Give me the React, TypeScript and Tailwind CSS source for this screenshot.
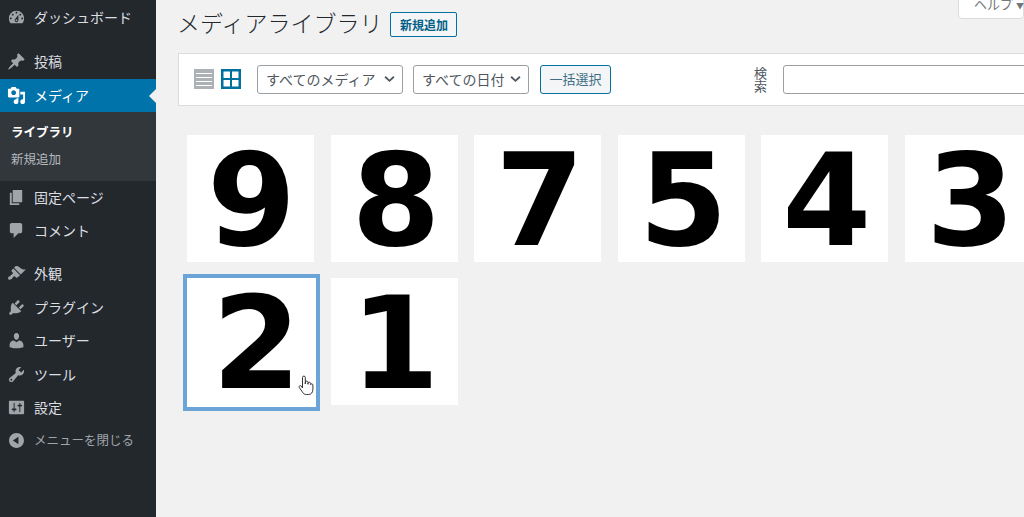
import React from "react";

const P: Record<string, string> = {
  dashboard:
    "M3.76 16h12.48c1.1-1.37 1.76-3.11 1.76-5 0-4.42-3.58-8-8-8s-8 3.58-8 8c0 1.89.66 3.63 1.76 5zM10 4c.55 0 1 .45 1 1s-.45 1-1 1-1-.45-1-1 .45-1 1-1zM6 6c.55 0 1 .45 1 1s-.45 1-1 1-1-.45-1-1 .45-1 1-1zm8 0c.55 0 1 .45 1 1s-.45 1-1 1-1-.45-1-1 .45-1 1-1zm-5.37 5.55L12 7v6c0 1.1-.9 2-2 2s-2-.9-2-2c0-.57.24-1.08.63-1.45zM4 10c.55 0 1 .45 1 1s-.45 1-1 1-1-.45-1-1 .45-1 1-1zm12 0c.55 0 1 .45 1 1s-.45 1-1 1-1-.45-1-1 .45-1 1-1zm-5 3c0-.55-.45-1-1-1s-1 .45-1 1 .45 1 1 1 1-.45 1-1z",
  post:
    "M10.44 3.02l1.82-1.82 6.36 6.35-1.83 1.82c-1.05-.68-2.48-.57-3.41.36l-.75.75c-.92.93-1.04 2.35-.35 3.41l-1.83 1.82-2.41-2.41-2.8 2.79c-.42.42-3.38 2.71-3.8 2.29s1.86-3.39 2.28-3.81l2.79-2.79L4.1 9.36l1.83-1.82c1.05.69 2.48.57 3.4-.36l.75-.75c.93-.92 1.05-2.35.36-3.41z",
  media:
    "M13 11V4c0-.55-.45-1-1-1h-1.67L9 1H5L3.67 3H2c-.55 0-1 .45-1 1v7c0 .55.45 1 1 1h10c.55 0 1-.45 1-1zM7 4.5c1.38 0 2.5 1.12 2.5 2.5S8.38 9.5 7 9.5 4.5 8.38 4.5 7 5.62 4.5 7 4.5zM14 6h5v10.5c0 1.38-1.12 2.5-2.5 2.5S14 17.88 14 16.5s1.12-2.5 2.5-2.5c.17 0 .34.02.5.05V9h-3V6zm-4 8.05V13h2v3.5c0 1.38-1.12 2.5-2.5 2.5S7 17.88 7 16.5 8.12 14 9.5 14c.17 0 .34.02.5.05z",
  page: "M6 15V2h10v13H6zm-1 1h8v2H3V5h2v11z",
  comment: "M5 2h9c1.1 0 2 .9 2 2v7c0 1.1-.9 2-2 2h-2l-5 5v-5H5c-1.1 0-2-.9-2-2V4c0-1.1.9-2 2-2z",
  appearance:
    "M14.48 11.06L7.41 3.99l1.5-1.5c.5-.56 2.3-.47 3.51.32 1.21.8 1.43 1.28 2.91 2.1 1.18.64 2.45 1.26 4.45.85zm-.71.71L6.7 4.7 4.93 6.47c-.39.39-.39 1.02 0 1.41l1.06 1.06c.39.39.39 1.03 0 1.42-.6.6-1.43 1.11-2.21 1.69-.35.26-.7.53-1.01.84C1.43 13.23.4 14.84 1.5 15.94c.52.53 1.32.67 2.05.48.76-.19 1.4-.75 1.83-1.2.5-.51 1-1.54 1.59-2.13.39-.39 1.03-.39 1.42 0l1.06 1.06c.39.39 1.02.39 1.41 0z",
  plugin:
    "M13.11 4.36L9.87 7.6 8 5.73l3.24-3.24c.35-.34 1.05-.2 1.56.32.52.51.66 1.21.31 1.55zm-8 1.77l.91-1.12 9.01 9.01-1.19.84c-.71.71-2.63 1.16-3.82 1.16H6.14L4.9 17.26c-.59.59-1.54.59-2.12 0-.59-.58-.59-1.53 0-2.12l1.24-1.24v-3.88c0-1.13.4-3.19 1.09-3.89zm7.26 3.97l3.24-3.24c.34-.35 1.04-.21 1.55.31.52.51.66 1.21.31 1.55l-3.24 3.25z",
  user:
    "M10 9.25c-2.27 0-2.73-3.44-2.73-3.44C7 4.02 7.82 2 9.97 2c2.16 0 2.98 2.02 2.71 3.81 0 0-.41 3.44-2.68 3.44zm0 2.57L12.72 10c2.39 0 4.52 2.33 4.52 4.53v2.49s-3.65 1.13-7.24 1.13c-3.65 0-7.24-1.13-7.24-1.13v-2.49c0-2.25 1.94-4.48 4.47-4.48z",
  tools:
    "M16.68 9.77c-1.34 1.34-3.3 1.67-4.95.99l-5.41 6.52c-.99.99-2.59.99-3.58 0s-.99-2.59 0-3.57l6.52-5.42c-.68-1.65-.35-3.61.99-4.95 1.28-1.28 3.12-1.62 4.72-1.06l-2.89 2.89 2.82 2.82 2.86-2.87c.53 1.58.18 3.39-1.08 4.65zM3.81 16.21c.4.39 1.04.39 1.43 0 .4-.4.4-1.04 0-1.43-.39-.4-1.03-.4-1.43 0-.39.39-.39 1.03 0 1.43z",
  settings:
    "M18 16V4c0-.55-.45-1-1-1H3c-.55 0-1 .45-1 1v12c0 .55.45 1 1 1h14c.55 0 1-.45 1-1zM8 11h1c.55 0 1 .45 1 1s-.45 1-1 1H8v1.5c0 .28-.22.5-.5.5s-.5-.22-.5-.5V13H6c-.55 0-1-.45-1-1s.45-1 1-1h1V5.5c0-.28.22-.5.5-.5s.5.22.5.5V11zm5-2h-1c-.55 0-1-.45-1-1s.45-1 1-1h1V5.5c0-.28.22-.5.5-.5s.5.22.5.5V7h1c.55 0 1 .45 1 1s-.45 1-1 1h-1v5.5c0 .28-.22.5-.5.5s-.5-.22-.5-.5V9z",
  collapse: "M10 2.16c4.33 0 7.84 3.51 7.84 7.84s-3.51 7.84-7.84 7.84S2.16 14.33 2.16 10 5.71 2.16 10 2.16zm2 11.72V6.12L6.18 9.97z",
};

function Icon({ name, className }: { name: string; className: string }) {
  return (
    <svg viewBox="0 0 20 20" className={className} fill="currentColor" aria-hidden="true">
      <path d={P[name]} />
    </svg>
  );
}

function Row({ icon, label, className = "h-[33.5px]" }: { icon: string; label: string; className?: string }) {
  return (
    <div className={`flex items-center pl-[7px] text-[14px] text-[#dcdee0] ${className}`}>
      <Icon name={icon} className="h-[19px] w-[19px] text-[#a0a5aa]" />
      <span className="ml-[8px] whitespace-nowrap">{label}</span>
    </div>
  );
}

function Chevron() {
  return (
    <svg viewBox="0 0 12 8" className="h-[8px] w-[11px]" fill="none" stroke="#50575e" strokeWidth="2" aria-hidden="true">
      <path d="M1.2 1.5 6 6l4.8-4.5" />
    </svg>
  );
}

function Select({ label, className }: { label: string; className: string }) {
  return (
    <div className={`flex h-[29px] items-center justify-between rounded-[3px] border border-[#9a9fa4] bg-white pl-[8px] pr-[7px] text-[14px] text-[#50575e] ${className}`}>
      <span className="whitespace-nowrap">{label}</span>
      <Chevron />
    </div>
  );
}

function Tile({ n, nudge, selected }: { n: string; nudge: string; selected?: boolean }) {
  return (
    <div
      className={`relative flex items-center justify-center bg-white text-[128px] font-bold leading-[127px] text-black ${
        selected
          ? "-mb-[2px] -mr-[2px] h-[129px] w-[129px] outline-[4px] outline-[#6ba5d8]"
          : "h-[127px] w-[127px]"
      }`}
      style={{ fontFamily: '"DejaVu Sans", sans-serif' }}
    >
      <span className={nudge}>{n}</span>
      {selected && (
        <svg viewBox="0 0 16 22" className="absolute bottom-[10px] right-[2px] h-[22px] w-[16px]" fill="#fff" stroke="#333" strokeWidth="1" aria-hidden="true">
          <path d="M4.5 13V2.5a1.4 1.4 0 0 1 2.8 0V9l.1-1.6a1.3 1.3 0 0 1 2.6 0V9.3l.1-1.2a1.3 1.3 0 0 1 2.5.2v1.3a1.2 1.2 0 0 1 2.3.3v4.3c0 3-1.4 5.3-4.6 5.3H8.5c-2 0-3-.8-4-2.3L1.3 12.5c-.9-1.4.9-2.6 2-1.4z" />
        </svg>
      )}
    </div>
  );
}

export default function App() {
  const tiles = [
    { n: "9", nudge: "translate-x-[1px] translate-y-[2px]" },
    { n: "8", nudge: "translate-x-[2px] translate-y-[2px]" },
    { n: "7", nudge: "translate-x-[2px] translate-y-[2px]" },
    { n: "5", nudge: "translate-x-[2px] translate-y-[2px]" },
    { n: "4", nudge: "translate-x-[2px] translate-y-[2px]" },
    { n: "3", nudge: "translate-x-[2px] translate-y-[2px]" },
    { n: "2", nudge: "translate-x-[5px] translate-y-[1px]" },
    { n: "1", nudge: "translate-x-[1px] translate-y-[2px]" },
  ];
  return (
    <div
      className="relative flex h-[517px] w-[1024px] overflow-hidden bg-[#f1f1f1]"
      style={{ fontFamily: '"Noto Sans CJK JP", "Noto Sans", sans-serif' }}
    >
      <aside className="flex w-[156px] shrink-0 flex-col bg-[#23282d] pt-[1px]">
        <Row icon="dashboard" label="ダッシュボード" />
        <div className="h-[10px]" />
        <Row icon="post" label="投稿" />
        <div className="relative mt-[1px] flex h-[33px] items-center bg-[#0073aa] pl-[7px] text-[14px] text-white">
          <Icon name="media" className="h-[19px] w-[19px] text-white" />
          <span className="ml-[8px]">メディア</span>
          <span className="absolute right-0 top-[10px] border-y-[7px] border-r-[7px] border-y-transparent border-r-[#f1f1f1]" />
        </div>
        <div className="flex h-[69px] flex-col bg-[#32373c] pl-[11px] pt-[7px]">
          <div className="flex h-[27px] items-center text-[12.5px] font-bold text-white">ライブラリ</div>
          <div className="flex h-[27px] items-center text-[12.5px] text-[#b4b9be]">新規追加</div>
        </div>
        <Row icon="page" label="固定ページ" className="h-[33px]" />
        <Row icon="comment" label="コメント" className="h-[33px]" />
        <div className="h-[10px]" />
        <Row icon="appearance" label="外観" />
        <Row icon="plugin" label="プラグイン" />
        <Row icon="user" label="ユーザー" />
        <Row icon="tools" label="ツール" />
        <Row icon="settings" label="設定" />
        <div className="flex h-[33.5px] items-center pb-[2px] pl-[7px] text-[12.5px] text-[#a0a5aa]">
          <Icon name="collapse" className="h-[19px] w-[19px]" />
          <span className="ml-[8px] whitespace-nowrap">メニューを閉じる</span>
        </div>
      </aside>

      <main className="min-w-0 flex-1 pl-[22px]">
        <div className="flex h-[53px] items-start">
          <h1 className="-ml-[1px] mt-[5px] h-[34px] whitespace-nowrap text-[23px] font-light leading-[34px] text-[#23282d]">
            メディアライブラリ
          </h1>
          <div className="ml-[8px] mt-[12px] flex h-[25px] w-[67px] items-center justify-center rounded-[2px] border border-[#0071a1] bg-[#f3f5f6] text-[12px] font-bold text-[#016087]">
            新規追加
          </div>
        </div>

        <div className="flex h-[53px] w-[870px] items-center border border-[#dcdcde] bg-white pb-[1px] pl-[15px]">
          <svg viewBox="0 0 20 20" className="h-[20px] w-[20px]" fill="#aeb1b4" aria-hidden="true">
            <path fillRule="evenodd" d="M0 0h20v20H0zM2 4v1h16V4zm0 4v1h16V8zm0 4v1h16v-1zm0 4v1h16v-1z" />
          </svg>
          <svg viewBox="0 0 20 20" className="ml-[7px] h-[20px] w-[20px]" fill="#00719f" aria-hidden="true">
            <path fillRule="evenodd" d="M0 0h20v20H0zM2.5 2.5V9H9V2.5zm8.5 0V9h6.5V2.5zM2.5 11v6.5H9V11zm8.5 0v6.5h6.5V11z" />
          </svg>
          <Select label="すべてのメディア" className="ml-[16px] w-[146px]" />
          <Select label="すべての日付" className="ml-[10px] w-[116px]" />
          <div className="ml-[11px] flex h-[29px] w-[71px] items-center justify-center rounded-[3px] border border-[#0071a1] bg-[#f3f5f6] text-[13px] text-[#3f6f85]">
            一括選択
          </div>
          <div className="ml-[143px] w-[14px] text-[13px] leading-[13px] text-[#50575e]">検索</div>
          <div className="ml-[15px] h-[29px] w-[260px] rounded-[3px] border border-[#9a9fa4] bg-white" />
        </div>

        <div className="mt-[29px] grid w-[880px] grid-cols-[repeat(6,127px)] gap-x-[16.6px] gap-y-[16px] pl-[9px]">
          {tiles.map((t) => (
            <Tile key={t.n} n={t.n} nudge={t.nudge} selected={t.n === "2"} />
          ))}
        </div>
      </main>

      <div className="absolute right-0 top-[-1px] flex h-[20px] w-[66px] items-end rounded-b-[4px] border border-[#dcdcde] bg-white pl-[15px] text-[13px] leading-[16px] text-[#72777c]">
        <span className="relative top-[-4px] whitespace-nowrap">
          ヘルプ <span className="text-[8px]">▼</span>
        </span>
      </div>
    </div>
  );
}
